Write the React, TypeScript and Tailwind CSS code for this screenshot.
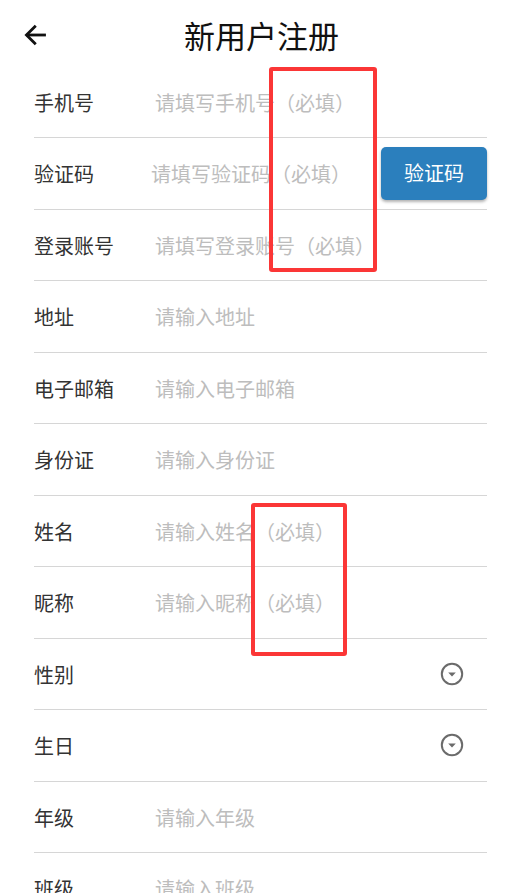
import React from 'react'

type Field = {
  label: string
  placeholder?: string
  select?: boolean
  code?: boolean
}

const fields: Field[] = [
  { label: '手机号', placeholder: '请填写手机号（必填）' },
  { label: '验证码', placeholder: '请填写验证码（必填）', code: true },
  { label: '登录账号', placeholder: '请填写登录账号（必填）' },
  { label: '地址', placeholder: '请输入地址' },
  { label: '电子邮箱', placeholder: '请输入电子邮箱' },
  { label: '身份证', placeholder: '请输入身份证' },
  { label: '姓名', placeholder: '请输入姓名（必填）' },
  { label: '昵称', placeholder: '请输入昵称（必填）' },
  { label: '性别', select: true },
  { label: '生日', select: true },
  { label: '年级', placeholder: '请输入年级' },
  { label: '班级', placeholder: '请输入班级' }
]

function DropIcon() {
  return (
    <svg width="26" height="26" viewBox="0 0 26 26" fill="none">
      <circle cx="13" cy="13" r="10.2" stroke="#6b6b6b" strokeWidth="2" />
      <path d="M9.2 11.6h7.6L13 15.4z" fill="#6b6b6b" />
    </svg>
  )
}

function Row({ f }: { f: Field }) {
  return (
    <div className="flex h-[71.5px] items-center border-b border-[#d6d6d6]">
      <div className="w-[121px] shrink-0 pt-[2px] text-[20px] text-[#333]">{f.label}</div>
      {f.placeholder && (
        <div className={`flex-1 pt-[2px] text-[20px] text-[#bdbdbd] ${f.code ? '-ml-[4px]' : ''}`}>{f.placeholder}</div>
      )}
      {f.select && (
        <div className="flex flex-1 justify-end pr-[22px]">
          <DropIcon />
        </div>
      )}
      {f.code && (
        <button className="h-[53px] w-[106px] shrink-0 rounded-[5px] bg-[#2b7fbd] text-[20px] text-white shadow-[0_2px_3px_rgba(0,0,0,0.3)]">
          验证码
        </button>
      )}
    </div>
  )
}

export default function App() {
  return (
    <div
      className="relative h-[893px] w-[518px] overflow-hidden bg-white"
      style={{ fontFamily: '"Noto Sans CJK SC", "Noto Sans", sans-serif' }}
    >
      <header className="relative flex h-[66.5px] items-center justify-center">
        <button className="absolute left-[20px] top-[19px] p-[2px]">
          <svg width="28" height="28" viewBox="0 0 24 24" fill="none" stroke="#111" strokeWidth="2.4">
            <path d="M20.5 12H4" />
            <path d="M11.8 4L3.8 12l8 8" />
          </svg>
        </button>
        <h1 className="pl-[5px] pt-[2px] text-[31px] leading-none text-[#111]">新用户注册</h1>
      </header>

      <div className="ml-[34px] mr-[31px]">
        {fields.map(f => (
          <Row key={f.label} f={f} />
        ))}
      </div>

      <div className="absolute left-[269px] top-[67px] h-[205px] w-[108px] rounded-[3px] border-4 border-[#fb3636]" />
      <div className="absolute left-[251px] top-[503px] h-[153px] w-[96px] rounded-[3px] border-4 border-[#fb3636]" />
    </div>
  )
}
